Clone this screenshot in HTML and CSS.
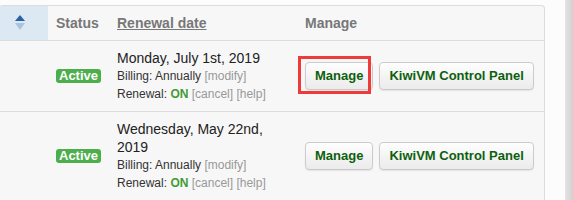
FILE: index.html
```html
<!DOCTYPE html>
<html lang="en">
<head>
  <meta charset="UTF-8">
  <title>My Services</title>
  <link rel="stylesheet" href="styles.css">
</head>
<body>
<div class="page">
  <div class="content">
    <div class="panel">
      <table class="services">
        <thead>
          <tr>
            <th class="sort">
              <svg width="10" height="16" viewBox="0 0 10 16">
                <path d="M5 0 L10 6 L0 6 Z" fill="#2762a8"/>
                <path d="M0 8 L10 8 L5 15 Z" fill="#abc4de"/>
              </svg>
            </th>
            <th class="col-status">Status</th>
            <th class="col-date"><a href="#">Renewal date</a></th>
            <th>Manage</th>
          </tr>
        </thead>
        <tbody>
          <tr>
            <td></td>
            <td class="status"><span class="badge">Active</span></td>
            <td>
              <div class="date">Monday, July 1st, 2019</div>
              <div class="info">Billing: Annually <a href="#">[modify]</a></div>
              <div class="info">Renewal: <b class="on">ON</b> <a href="#">[cancel]</a> <a href="#">[help]</a></div>
            </td>
            <td>
              <div class="actions">
                <button class="btn">Manage</button>
                <button class="btn">KiwiVM Control Panel</button>
                <span class="highlight"></span>
              </div>
            </td>
          </tr>
          <tr>
            <td></td>
            <td class="status"><span class="badge">Active</span></td>
            <td>
              <div class="date">Wednesday, May 22nd, 2019</div>
              <div class="info">Billing: Annually <a href="#">[modify]</a></div>
              <div class="info">Renewal: <b class="on">ON</b> <a href="#">[cancel]</a> <a href="#">[help]</a></div>
            </td>
            <td>
              <div class="actions">
                <button class="btn">Manage</button>
                <button class="btn">KiwiVM Control Panel</button>
              </div>
            </td>
          </tr>
        </tbody>
      </table>
    </div>
  </div>
  <div class="strip"></div>
</div>
</body>
</html>
```

FILE: styles.css
```css
body {
  margin: 0;
  font-family: "Liberation Sans", Arial, sans-serif;
  background: #fcfcfc;
  color: #333;
}

.page {
  display: flex;
  height: 200px;
  overflow: hidden;
}

.content {
  flex: 1;
  padding: 5px 20px 0 0;
}

.strip {
  width: 8px;
  background: linear-gradient(to right, #e4e4e4, #d0d0d0);
}

.panel {
  margin-left: -1px;
  border: 1px solid #dcdcdc;
  border-bottom: none;
  border-radius: 4px 4px 0 0;
  background: #f7f7f7;
  overflow: hidden;
}

.services {
  width: 100%;
  border-collapse: separate;
  border-spacing: 0;
  table-layout: fixed;
}

.services th,
.services td {
  box-sizing: border-box;
  padding: 8px;
  text-align: left;
  vertical-align: middle;
}

.services th {
  font-size: 14px;
  line-height: 18px;
  font-weight: bold;
  color: #777;
}

.services th a {
  color: #777;
  text-decoration: underline;
}

.services th.sort {
  width: 48px;
  padding-left: 15px;
  background: #dce8f2;
}

.sort svg {
  display: block;
}

.col-status {
  width: 61px;
}

.col-date {
  width: 188px;
}

.services td {
  border-top: 1px solid #dcdcdc;
}

.status {
  font-size: 13px;
  line-height: 14px;
}

.badge {
  display: inline-block;
  padding: 0 3px;
  background: #4cae4c;
  color: #fff;
  font-size: 13px;
  font-weight: bold;
  line-height: 14px;
  border-radius: 3px;
}

.date {
  font-size: 14px;
  line-height: 18px;
  color: #222;
}

.info {
  font-size: 12px;
  line-height: 18px;
  color: #333;
}

.info a {
  color: #999;
  text-decoration: none;
}

.on {
  color: #3f9c35;
}

.actions {
  position: relative;
  display: flex;
  gap: 6px;
}

.btn {
  padding: 5px 9px;
  font-family: inherit;
  font-size: 13px;
  font-weight: bold;
  line-height: 16px;
  color: #0d600d;
  background: linear-gradient(#fefefe, #ebebeb);
  border: 1px solid #cbcbcb;
  border-radius: 4px;
  box-shadow: 0 1px 1px rgba(0, 0, 0, 0.08);
  cursor: pointer;
}

.highlight {
  position: absolute;
  left: -7px;
  top: -6px;
  width: 73px;
  height: 38px;
  box-sizing: border-box;
  border: 3px solid #ef3a3a;
}
```
